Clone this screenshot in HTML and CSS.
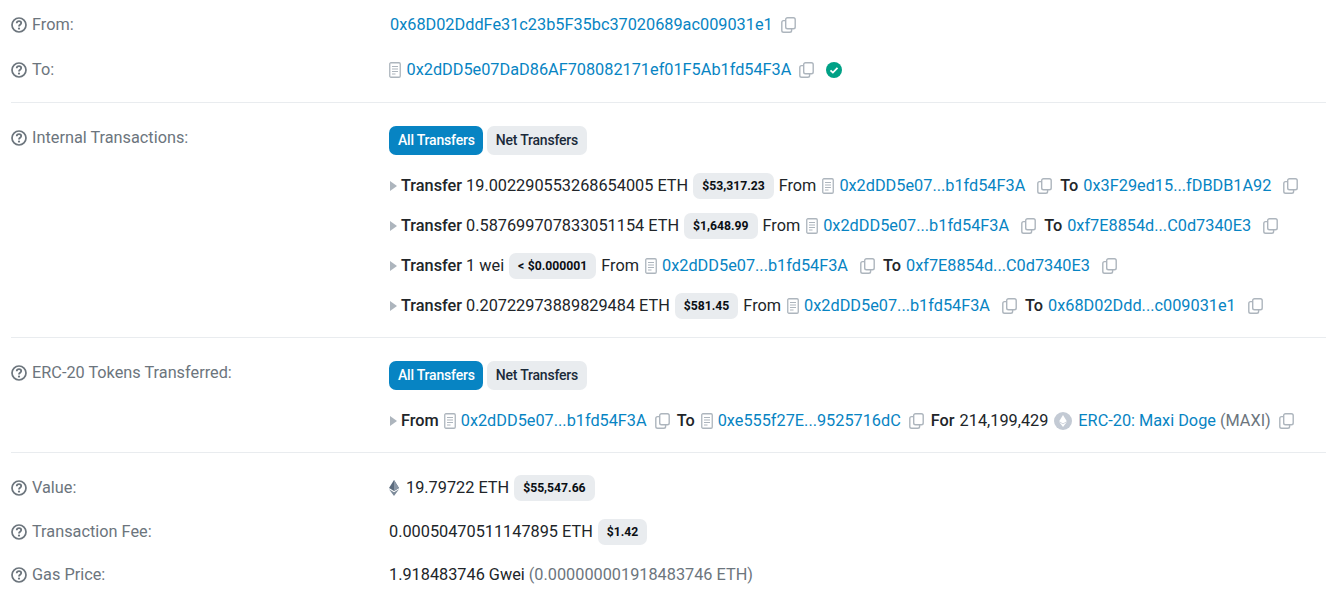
FILE: index.html
```html
<!DOCTYPE html>
<html lang="en">
<head>
<meta charset="utf-8">
<title>Transaction details</title>
<link rel="stylesheet" href="styles.css">
</head>
<body>
<svg class="defs" aria-hidden="true">
  <symbol id="help" viewBox="0 0 16 16">
    <circle cx="8" cy="8" r="7" fill="none" stroke="currentColor" stroke-width="1.700"/>
    <path d="M5.700 6.200c.1-1.300 1-2 2.300-2s2.200.8 2.200 1.900c0 1.700-2.200 1.700-2.200 3.300" fill="none" stroke="currentColor" stroke-width="1.800"/>
    <circle cx="8" cy="11.600" r="1.100" fill="currentColor"/>
  </symbol>
  <symbol id="doc" viewBox="0 0 12 16">
    <rect x=".75" y=".75" width="10.500" height="14.500" rx="1.200" fill="none" stroke="currentColor" stroke-width="1.300"/>
    <path d="M3 4.500h6M3 7h6M3 9.500h6M3 12h3.500" stroke="currentColor" stroke-width="1.100" fill="none"/>
  </symbol>
  <symbol id="copy" viewBox="0 0 15 16">
    <rect x="4.700" y=".75" width="9.500" height="11" rx="1.800" fill="none" stroke="currentColor" stroke-width="1.400"/>
    <path d="M4.700 3.600H2.600C1.500 3.600.8 4.300.8 5.400v8c0 1.100.7 1.800 1.800 1.800h6.200c1.100 0 1.800-.7 1.800-1.800v-1.600" fill="none" stroke="currentColor" stroke-width="1.400"/>
  </symbol>
  <symbol id="arrow" viewBox="0 0 7 10">
    <path d="M0 0l7 5-7 5z" fill="currentColor"/>
  </symbol>
  <symbol id="eth" viewBox="0 0 10 16">
    <path d="M5 0L0 8.100l5 2.900 5-2.900z" fill="#5b6b7d"/>
    <path d="M5 0v11l5-2.900z" fill="#8a97a6"/>
    <path d="M0 9.300L5 16l5-6.700-5 2.900z" fill="#7c8a99"/>
  </symbol>
</svg>

<main class="details">
  <section class="group">
    <div class="row row-from">
      <div class="label"><svg class="ic-help"><use href="#help"/></svg>From:</div>
      <div class="value">
        <a class="link from-link">0x68D02DddFe31c23b5F35bc37020689ac009031e1</a>
        <svg class="ic-copy copy-a"><use href="#copy"/></svg>
      </div>
    </div>
    <div class="row row-to">
      <div class="label"><svg class="ic-help"><use href="#help"/></svg>To:</div>
      <div class="value">
        <svg class="ic-doc doc-top"><use href="#doc"/></svg>
        <a class="link">0x2dDD5e07DaD86AF708082171ef01F5Ab1fd54F3A</a>
        <svg class="ic-copy copy-a"><use href="#copy"/></svg>
        <span class="check"><svg viewBox="0 0 16 16"><path d="M4.500 8.300l2.400 2.300 4.600-4.800" fill="none" stroke="#fff" stroke-width="1.800"/></svg></span>
      </div>
    </div>
  </section>

  <section class="group group-internal">
    <div class="row row-block">
      <div class="label"><svg class="ic-help"><use href="#help"/></svg>Internal Transactions:</div>
      <div class="stack">
        <div class="tabs"><span class="tab tab-on">All Transfers</span><span class="tab">Net Transfers</span></div>
        <div class="transfer">
          <svg class="ic-arrow"><use href="#arrow"/></svg><b>Transfer</b><span class="sp">19.002290553268654005 ETH</span><span class="badge">$53,317.23</span><span class="from">From</span><svg class="ic-doc"><use href="#doc"/></svg><a class="link">0x2dDD5e07...b1fd54F3A</a><svg class="ic-copy copy-b"><use href="#copy"/></svg><b class="to">To</b><a class="link">0x3F29ed15...fDBDB1A92</a><svg class="ic-copy copy-b"><use href="#copy"/></svg>
        </div>
        <div class="transfer">
          <svg class="ic-arrow"><use href="#arrow"/></svg><b>Transfer</b><span class="sp">0.587699707833051154 ETH</span><span class="badge">$1,648.99</span><span class="from">From</span><svg class="ic-doc"><use href="#doc"/></svg><a class="link">0x2dDD5e07...b1fd54F3A</a><svg class="ic-copy copy-b"><use href="#copy"/></svg><b class="to">To</b><a class="link">0xf7E8854d...C0d7340E3</a><svg class="ic-copy copy-b"><use href="#copy"/></svg>
        </div>
        <div class="transfer">
          <svg class="ic-arrow"><use href="#arrow"/></svg><b>Transfer</b><span class="sp">1 wei</span><span class="badge">&lt; $0.000001</span><span class="from">From</span><svg class="ic-doc"><use href="#doc"/></svg><a class="link">0x2dDD5e07...b1fd54F3A</a><svg class="ic-copy copy-b"><use href="#copy"/></svg><b class="to">To</b><a class="link">0xf7E8854d...C0d7340E3</a><svg class="ic-copy copy-b"><use href="#copy"/></svg>
        </div>
        <div class="transfer">
          <svg class="ic-arrow"><use href="#arrow"/></svg><b>Transfer</b><span class="sp">0.20722973889829484 ETH</span><span class="badge">$581.45</span><span class="from">From</span><svg class="ic-doc"><use href="#doc"/></svg><a class="link">0x2dDD5e07...b1fd54F3A</a><svg class="ic-copy copy-b"><use href="#copy"/></svg><b class="to">To</b><a class="link">0x68D02Ddd...c009031e1</a><svg class="ic-copy copy-b"><use href="#copy"/></svg>
        </div>
      </div>
    </div>
  </section>

  <section class="group group-tokens">
    <div class="row row-block">
      <div class="label"><svg class="ic-help"><use href="#help"/></svg>ERC-20 Tokens Transferred:</div>
      <div class="stack">
        <div class="tabs"><span class="tab tab-on">All Transfers</span><span class="tab">Net Transfers</span></div>
        <div class="transfer">
          <svg class="ic-arrow"><use href="#arrow"/></svg><b>From</b><svg class="ic-doc doc-tok"><use href="#doc"/></svg><a class="link">0x2dDD5e07...b1fd54F3A</a><svg class="ic-copy copy-c"><use href="#copy"/></svg><b class="to-c">To</b><svg class="ic-doc doc-tok"><use href="#doc"/></svg><a class="link">0xe555f27E...9525716dC</a><svg class="ic-copy copy-c"><use href="#copy"/></svg><b class="to-c">For</b><span class="sp">214,199,429</span>
          <span class="token"><svg viewBox="0 0 18 18"><path d="M9 3L5.200 9.200 9 11.400l3.800-2.200z" fill="#fff"/><path d="M5.200 10.100L9 15l3.800-4.900L9 12.300z" fill="#fff"/></svg></span><a class="link">ERC-20: Maxi Doge</a><span class="muted sym">(MAXI)</span><svg class="ic-copy copy-d"><use href="#copy"/></svg>
        </div>
      </div>
    </div>
  </section>

  <section class="group group-last">
    <div class="row row-value">
      <div class="label"><svg class="ic-help"><use href="#help"/></svg>Value:</div>
      <div class="value"><svg class="ic-eth"><use href="#eth"/></svg>19.79722 ETH<span class="badge badge-v">$55,547.66</span></div>
    </div>
    <div class="row row-fee">
      <div class="label"><svg class="ic-help"><use href="#help"/></svg>Transaction Fee:</div>
      <div class="value">0.00050470511147895 ETH<span class="badge badge-v">$1.42</span></div>
    </div>
    <div class="row row-gas">
      <div class="label"><svg class="ic-help"><use href="#help"/></svg>Gas Price:</div>
      <div class="value">1.918483746 Gwei<span class="muted gas-eth">(0.000000001918483746 ETH)</span></div>
    </div>
  </section>
</main>
</body>
</html>
```

FILE: styles.css
```css
* { box-sizing: border-box; }
html, body { margin: 0; padding: 0; background: #fff; }
body {
  font-family: Roboto, "Liberation Sans", sans-serif;
  font-size: 16.3px;
  line-height: 22px;
  color: #212529;
  overflow: hidden;
  height: 600px;
}
.defs { width: 0; height: 0; position: absolute; }
.details { padding: 0 0 0 11px; }
.group { border-bottom: 1px solid #e9ecef; }
.group-last { border-bottom: 0; padding-top: 24px; }
.group-internal { padding: 24px 0 11px; }
.group-tokens { padding: 24px 0 11px; }
.row { display: flex; }
.row-from { padding-top: 14px; height: 59px; }
.row-to { height: 43px; align-items: flex-start; }
.row-value { height: 44px; }
.row-fee { height: 43px; }
.row-gas { height: 44px; }
.label {
  flex: 0 0 378px;
  display: flex;
  align-items: center;
  height: 22px;
  color: #6c757d;
}
.ic-help { width: 16px; height: 16px; margin-right: 5px; color: #6c757d; flex: none; }
.value { display: flex; align-items: center; height: 22px; white-space: nowrap; }
.link { color: #0784c3; white-space: nowrap; }
.from-link { margin-left: 1px; }
.ic-doc { width: 12px; height: 16px; color: #adb5bd; flex: none; margin-right: 5px; }
.doc-top { margin-right: 5.500px; }
.ic-copy { width: 15px; height: 16px; color: #adb5bd; flex: none; }
.copy-a { margin-left: 8px; }
.check {
  width: 16px; height: 16px; margin-left: 12px; border-radius: 50%;
  background: #00a186; display: inline-flex; flex: none;
}
.check svg { width: 16px; height: 16px; }
.stack { display: flex; flex-direction: column; }
.tabs { display: flex; gap: 4px; height: 29px; margin-top: -1px; }
.tab {
  display: flex; align-items: center; padding: 0 9px 1px;
  height: 29px; border-radius: 7px;
  background: #e9ecef; color: #1b2a3a;
  font-size: 14px; font-weight: 500; letter-spacing: -.2px;
}
.tab-on { background: #0784c3; color: #fff; padding-right: 8px; }
.transfer {
  display: flex; align-items: center; height: 40px; white-space: nowrap;
}
.tabs + .transfer { margin-top: 11px; }
.ic-arrow { width: 7px; height: 10px; color: #adb5bd; margin: 0 4px 0 1px; flex: none; }
.transfer b { font-weight: 500; color: #212529; }
.sp { margin-left: 4px; }
.to-c + .sp { margin-left: 5px; }
.badge {
  display: inline-flex; align-items: center; height: 26px;
  margin-left: 5px; padding: 0 9px; border-radius: 7px;
  background: #e9ecef; color: #0a0f14;
  font-size: 12.200px; font-weight: 700; line-height: 1; word-spacing: .5px;
}
.from { margin-left: 5px; margin-right: 6px; }
.copy-b { margin: 0 8px 0 12px; }
.transfer b.to { margin-right: 5px; }
.doc-tok { margin-left: 5px; }
.copy-c { margin: 0 7px 0 8px; }
.transfer b.to-c + .doc-tok { margin-left: 6px; }
.token {
  width: 18px; height: 18px; border-radius: 50%; background: #c3cad4;
  margin: 0 6px 0 6px; flex: none; display: inline-flex;
}
.token svg { width: 18px; height: 18px; }
.muted { color: #6c757d; }
.sym { margin-left: 4px; }
.copy-d { margin-left: 8px; }
.ic-eth { width: 10px; height: 16px; margin-right: 7px; flex: none; }
.gas-eth { margin-left: 4px; }
```
